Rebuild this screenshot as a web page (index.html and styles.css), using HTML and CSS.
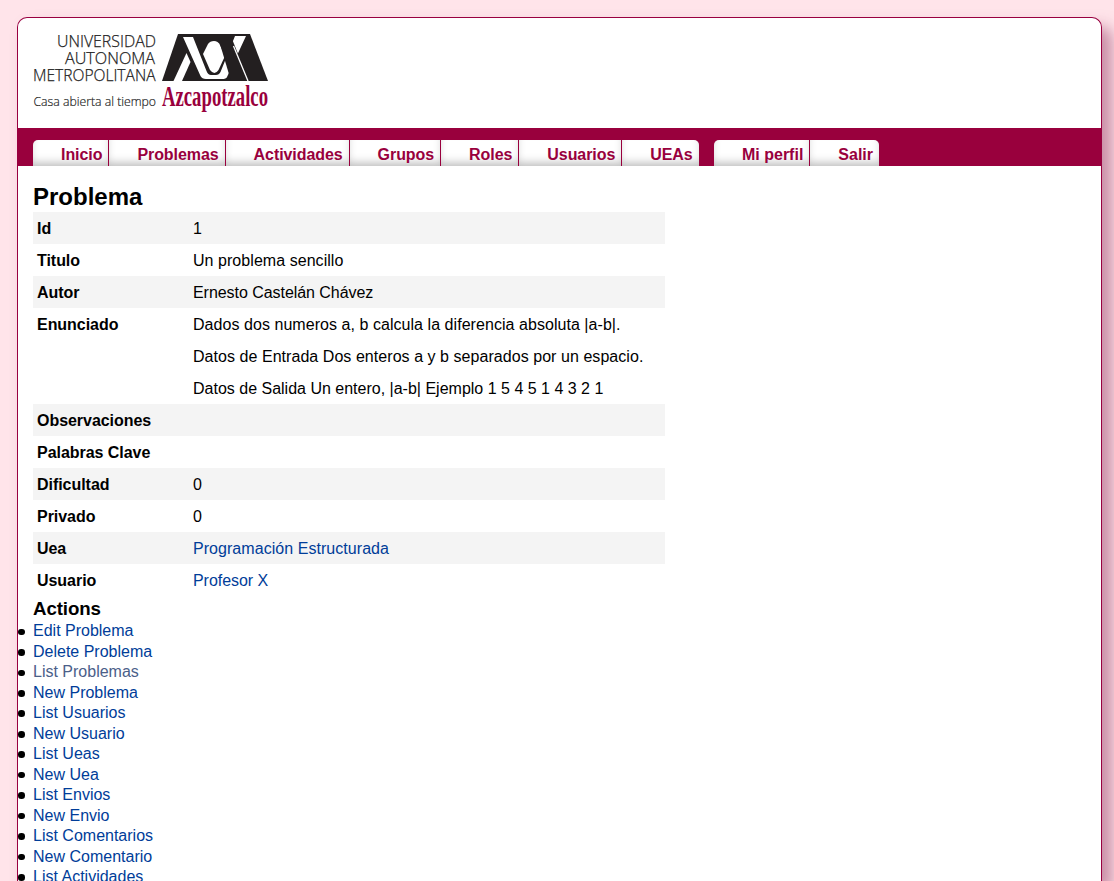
FILE: index.html
```html
<!DOCTYPE html>
<html lang="es">
<head>
<meta charset="utf-8">
<title>Problema</title>
<link rel="stylesheet" href="styles.css">
</head>
<body>
<div class="container">
<header class="header">
<svg class="logo" width="237" height="82" viewBox="33 32 237 82" role="img" aria-label="Universidad Autónoma Metropolitana Azcapotzalco">
<g class="logo-name">
<text x="57" y="47" textLength="99" lengthAdjust="spacingAndGlyphs">UNIVERSIDAD</text>
<text x="65" y="64" textLength="90" lengthAdjust="spacingAndGlyphs">AUTONOMA</text>
<text x="33" y="81" textLength="122.5" lengthAdjust="spacingAndGlyphs">METROPOLITANA</text>
</g>
<text class="logo-motto" x="33.5" y="106" textLength="122.500" lengthAdjust="spacingAndGlyphs">Casa abierta al tiempo</text>
<path fill="#231f20" d="M162 81L178 34H250L268 81Z"/>
<g fill="#fff">
<path d="M173.500 81L186.500 53L190.500 62L182 81Z"/>
<path d="M183 37H193L206.500 71Q208 75 211 75H216Q219 75 220.500 72L235 36H246L227 77Q226 79 222 79H206Q202 79 200.500 76Z"/>
<path d="M203 54L208 44Q210 41 214 41Q218 41 220 45L225 56L218.500 70Q214.500 76 210 70Z"/>
</g>
<path fill="#231f20" d="M217 34H230L249 81H231Z"/>
<path stroke="#fff" stroke-width="1.300" d="M233.500 46L248 81"/>
<text class="logo-campus" transform="translate(162 106) scale(1 1.45)" x="0" y="0" textLength="106" lengthAdjust="spacingAndGlyphs">Azcapotzalco</text>
</svg>
</header>
<nav class="nav">
<ul class="tabs tabs-main">
<li><a>Inicio</a></li><li><a>Problemas</a></li><li><a>Actividades</a></li><li><a>Grupos</a></li><li><a>Roles</a></li><li><a>Usuarios</a></li><li><a>UEAs</a></li>
</ul>
<ul class="tabs">
<li><a>Mi perfil</a></li><li><a>Salir</a></li>
</ul>
</nav>
<main class="content">
<h2>Problema</h2>
<dl>
<div><dt>Id</dt><dd>1</dd></div>
<div><dt>Titulo</dt><dd>Un problema sencillo</dd></div>
<div><dt>Autor</dt><dd class="plain">Ernesto Castelán Chávez</dd></div>
<div><dt>Enunciado</dt><dd><p>Dados dos numeros a, b calcula la diferencia absoluta |a-b|.</p><p>Datos de Entrada Dos enteros a y b separados por un espacio.</p><p class="plain">Datos de Salida Un entero, |a-b| Ejemplo 1 5 4 5 1 4 3 2 1</p></dd></div>
<div><dt>Observaciones</dt><dd></dd></div>
<div><dt>Palabras Clave</dt><dd></dd></div>
<div><dt>Dificultad</dt><dd>0</dd></div>
<div><dt>Privado</dt><dd>0</dd></div>
<div><dt>Uea</dt><dd><a>Programación Estructurada</a></dd></div>
<div><dt>Usuario</dt><dd class="plain"><a>Profesor X</a></dd></div>
</dl>
<h3>Actions</h3>
<ul class="actions">
<li><a>Edit Problema</a></li>
<li><a>Delete Problema</a></li>
<li><a class="hover">List Problemas</a></li>
<li><a>New Problema</a></li>
<li><a>List Usuarios</a></li>
<li><a>New Usuario</a></li>
<li><a>List Ueas</a></li>
<li><a>New Uea</a></li>
<li><a>List Envios</a></li>
<li><a>New Envio</a></li>
<li><a>List Comentarios</a></li>
<li><a>New Comentario</a></li>
<li><a>List Actividades</a></li>
</ul>
</main>
</div>
</body>
</html>
```
FILE: styles.css
```css
* { margin: 0; padding: 0; box-sizing: border-box; }
html { height: 100%; overflow: hidden; }
body {
  height: 881px;
  overflow: hidden;
  padding: 17px 12px 0 17px;
  background: #ffe4ea;
  font: 16px/32px "Liberation Sans", Arial, sans-serif;
  color: #000;
}
.container {
  height: 864px;
  border: 1px solid #990040;
  border-bottom: 0;
  border-radius: 10px 10px 0 0;
  background: #fff;
  box-shadow: 10px 10px 15px rgba(153, 65, 105, .54);
}
.header { height: 110px; padding: 14px 15px 0; }
.logo { display: block; overflow: visible; }
.logo-name { font: 300 17px "Open Sans", sans-serif; fill: #222; stroke: #222; stroke-width: .25; }
.logo-motto { font: 300 13px "Open Sans", sans-serif; fill: #222; stroke: #222; stroke-width: .2; }
.logo-campus { font: bold 20px "Liberation Serif", serif; fill: #99003d; }
.nav {
  display: flex;
  gap: 16px;
  height: 38px;
  padding: 12px 15px 0;
  background: #99003d;
}
.tabs { display: flex; list-style: none; }
.tabs-main { width: 665px; letter-spacing: -.07px; }
.tabs li {
  height: 26px;
  padding: 0 6px 0 28px;
  background: #fff;
  box-shadow: inset 0 -6px 10px -3px #bbb;
  font-weight: bold;
  line-height: 29px;
  white-space: nowrap;
  color: #99003d;
}
.tabs li + li { border-left: 1px solid #99003d; }
.tabs li:first-child { border-top-left-radius: 5px; }
.tabs li:last-child { border-top-right-radius: 5px; }
.tabs-main li:last-child { flex: 1; }
.content { padding: 16px 15px 0; }
h2 { height: 30px; font-size: 24px; line-height: 30px; }
dl { width: 632px; line-height: 32px; }
dl div { display: flex; min-height: 32px; background: #fff; }
dl div:nth-child(odd) { background: #f4f4f4; }
dt { width: 160px; padding: 1px 0 0 4px; height: 32px; font-weight: bold; letter-spacing: -.04px; }
dd { flex: 1; height: 32px; padding-top: 1px; white-space: nowrap; letter-spacing: .05px; }
dd:has(p) { height: 96px; }
.plain { letter-spacing: -.05px; }
p.plain { letter-spacing: 0; }
a { color: #003d99; }
.tabs a { color: inherit; }
h3 { height: 25.4px; font-size: 18.7px; line-height: 25px; letter-spacing: -.1px; }
.actions { height: 248px; list-style: none; line-height: 20.47px; }
.actions li { position: relative; }
/* round markers hang in the page gutter */
.actions li::before {
  content: "";
  position: absolute;
  left: -14.6px;
  top: 7.2px;
  width: 6.6px;
  height: 6.6px;
  border-radius: 50%;
  background: #000;
}
.actions .hover { color: #4b6089; }
```
